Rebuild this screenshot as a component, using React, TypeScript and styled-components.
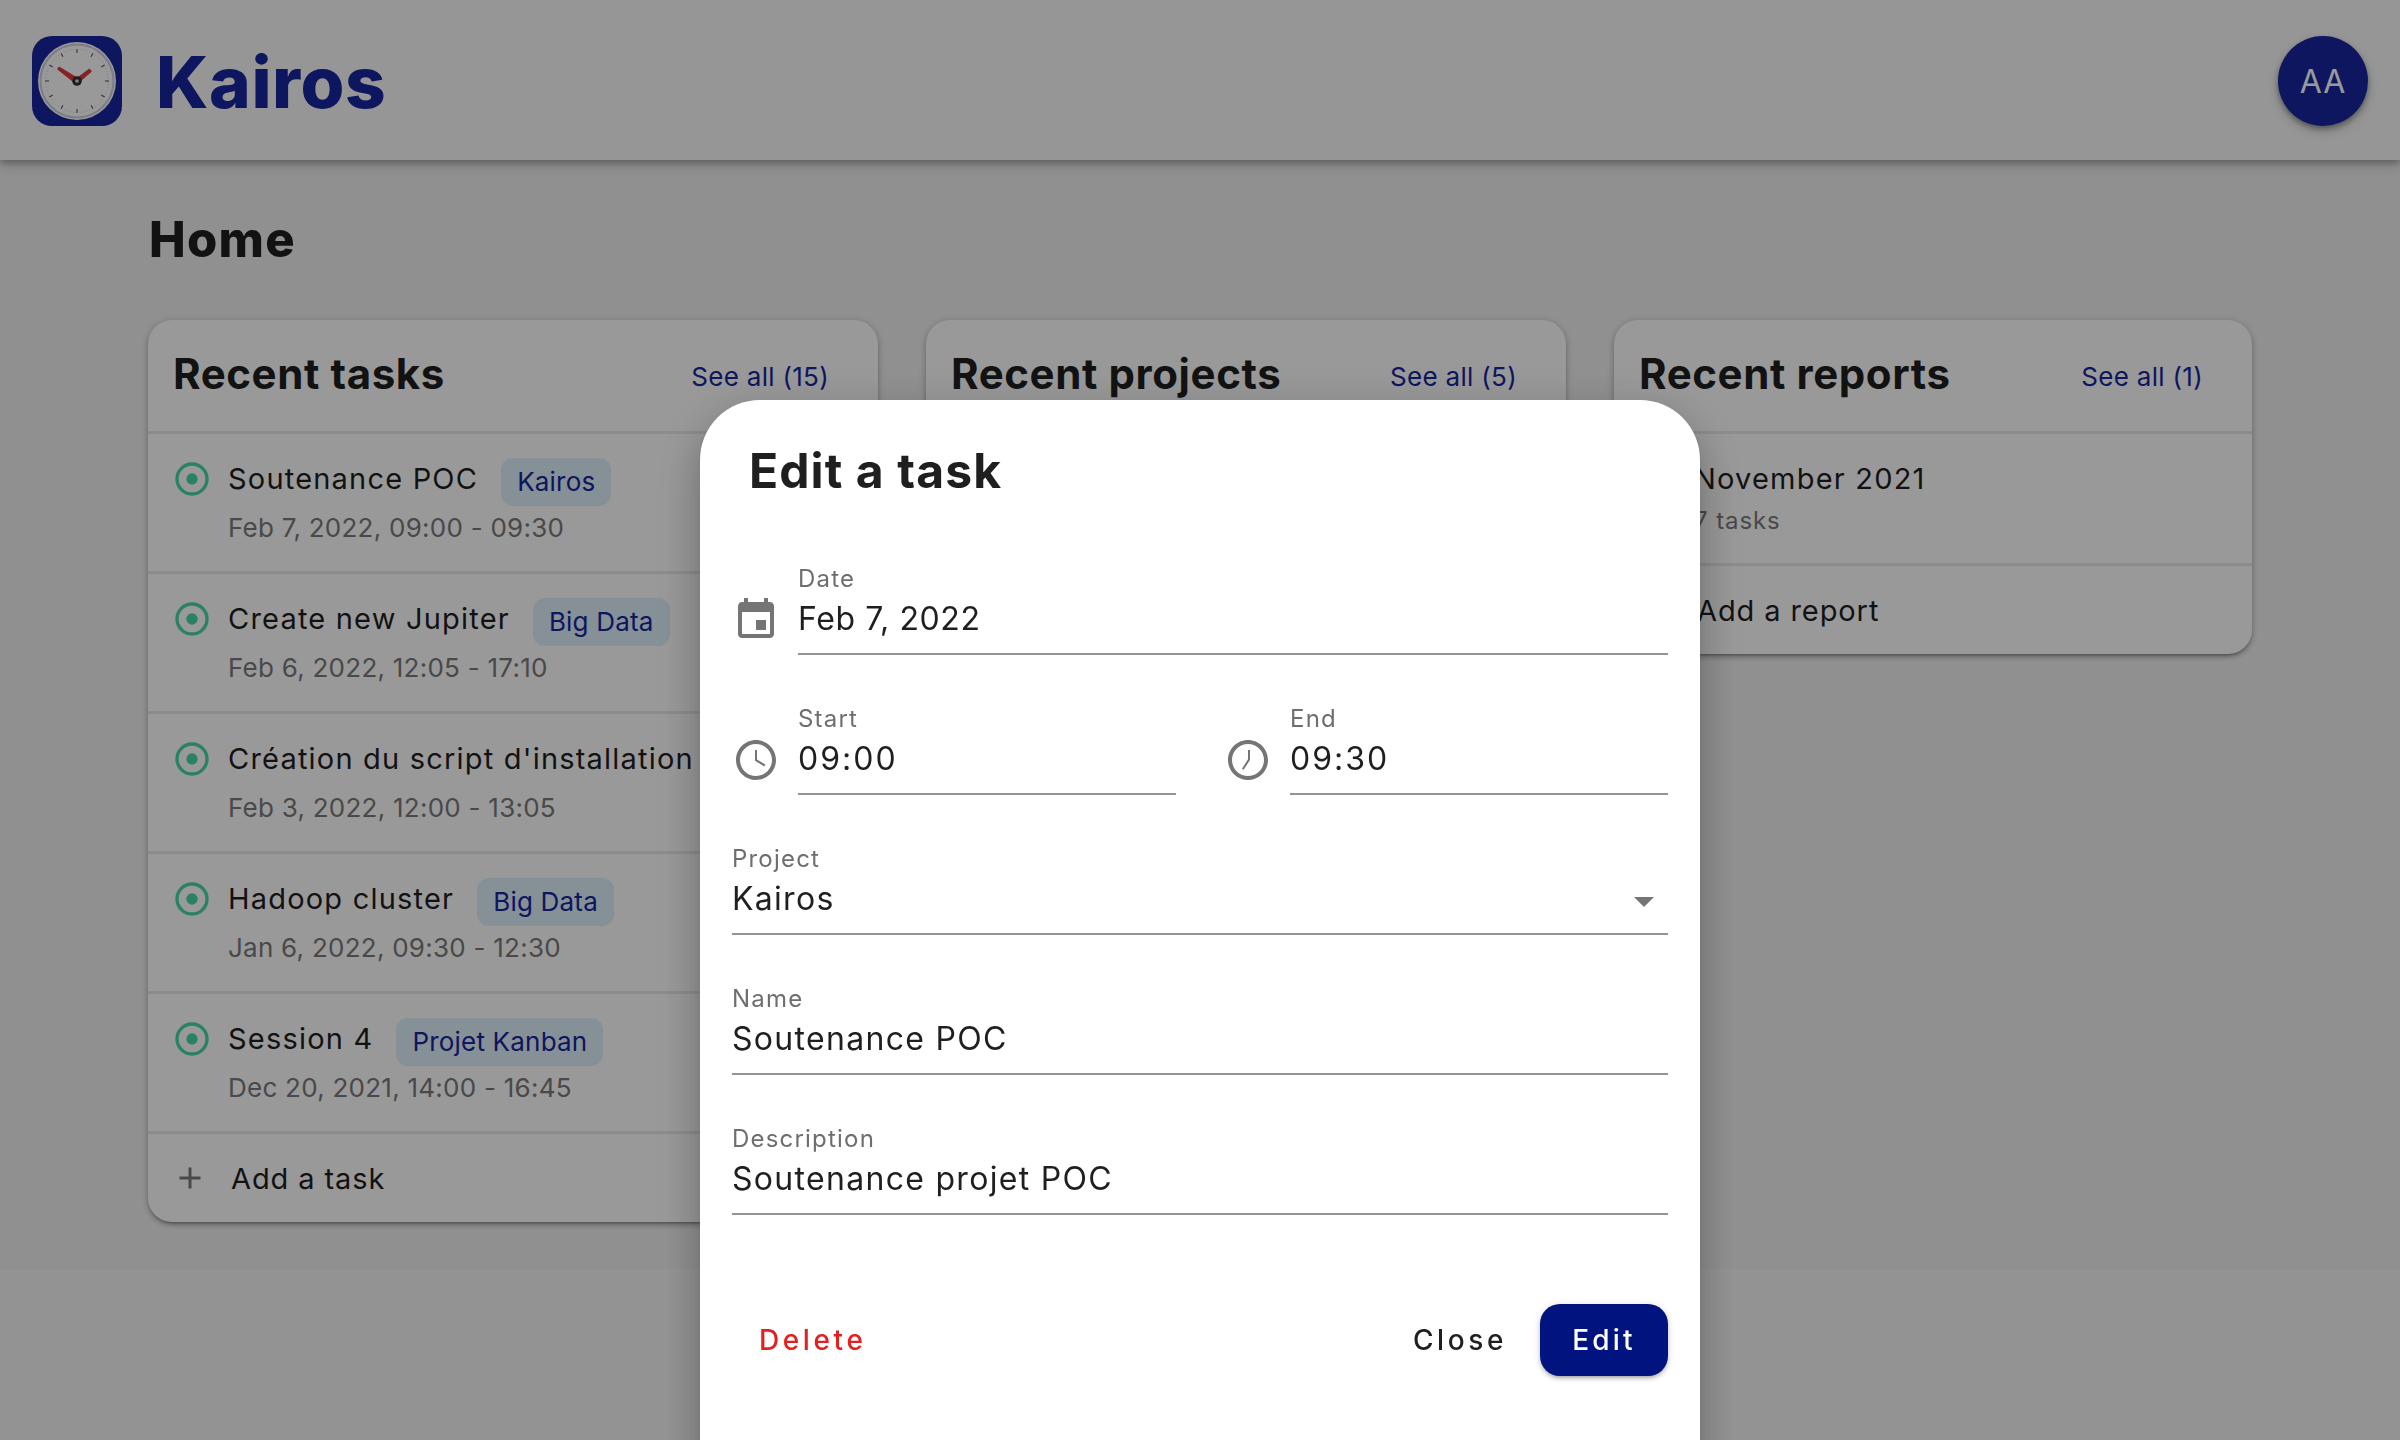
import React from "react";
import styled, { createGlobalStyle } from "styled-components";

const Global = createGlobalStyle`
  html, body { margin: 0; padding: 0; height: 100%; overflow: hidden; background: #f5f5f5; }
  * { box-sizing: border-box; }
  body { font-family: Inter, "Noto Sans", sans-serif; color: #1f1f1f; }
`;

const Page = styled.div`
  width: 2400px;
  height: 1440px;
  display: flex;
  flex-direction: column;
  overflow: hidden;
  background: #f1f1f1;
`;
const Header = styled.header`
  height: 160px;
  flex: none;
  display: flex;
  align-items: center;
  padding: 2px 32px 0;
  background: #fafafa;
  box-shadow: 0 3px 6px rgba(0,0,0,.25), 0 6px 14px rgba(0,0,0,.14);
  position: relative;
`;
const Logo = styled.svg`
  width: 90px;
  height: 90px;
  flex: none;
`;
const Brand = styled.div`
  margin: 2px 0 0 34px;
  font-size: 71px;
  font-weight: 800;
  color: #16269e;
  letter-spacing: 0.6px;
`;
const Avatar = styled.div`
  margin-left: auto;
  width: 90px;
  height: 90px;
  border-radius: 50%;
  background: #16269e;
  color: #fff;
  display: flex;
  align-items: center;
  justify-content: center;
  font-size: 32px;
  letter-spacing: 1px;
  box-shadow: 0 3px 5px rgba(0,0,0,.3), 0 5px 12px rgba(0,0,0,.2);
`;
const Main = styled.main`
  height: 1109px;
  flex: none;
  padding: 51px 148px 0;
`;
const PageTitle = styled.h1`
  margin: 0 0 51px 1px;
  font-size: 49px;
  line-height: 58px;
  font-weight: 800;
  letter-spacing: 1.3px;
`;
const Columns = styled.div`
  display: grid;
  grid-template-columns: 730px 640px 638px;
  gap: 48px;
  align-items: start;
`;
const Card = styled.section`
  background: #fff;
  border-radius: 24px;
  box-shadow: 0 3px 3px -2px rgba(0,0,0,.3), 0 3px 5px rgba(0,0,0,.2), 0 1px 10px rgba(0,0,0,.14);
  overflow: hidden;
`;
const CardHead = styled.div`
  height: 114px;
  display: flex;
  align-items: center;
  justify-content: space-between;
  padding: 0 49px 0 25px;
  border-bottom: 3px solid #e9e9e9;
`;
const CardTitle = styled.h2`
  margin: 0 0 4px;
  font-size: 42px;
  font-weight: 700;
  letter-spacing: 0.6px;
`;
const SeeAll = styled.a`
  font-size: 26px;
  color: #16269e;
  letter-spacing: 0.3px;
  margin-top: 2px;
`;
const Row = styled.div<{ $h: number }>`
  height: ${(p) => p.$h}px;
  display: flex;
  align-items: flex-start;
  padding: 24px 0 0 24px;
  border-bottom: 3px solid #e9e9e9;
`;
const RadioIcon = styled.svg`
  width: 40px;
  height: 40px;
  flex: none;
  color: #46d8a8;
  margin: 1px 16px 0 0;
`;
const RowBody = styled.div`
  min-width: 0;
  white-space: nowrap;
`;
const TitleLine = styled.div`
  display: flex;
  align-items: flex-start;
  gap: 23px;
`;
const RowTitle = styled.div`
  font-size: 29px;
  line-height: 42px;
  letter-spacing: 1.2px;
`;
const Chip = styled.span`
  height: 48px;
  padding: 0 16px 2px;
  display: flex;
  align-items: center;
  border-radius: 12px;
  background: #dff1fc;
  color: #16269e;
  font-size: 26px;
  letter-spacing: 0.2px;
`;
const RowSub = styled.div<{ $small?: boolean }>`
  margin-top: ${(p) => (p.$small ? 3 : 4)}px;
  font-size: ${(p) => (p.$small ? 24 : 26)}px;
  line-height: 36px;
  color: #7a7a7a;
  letter-spacing: ${(p) => (p.$small ? 0.9 : 0.25)}px;
`;
const AddRow = styled.div`
  height: 88px;
  display: flex;
  align-items: center;
  padding-left: 24px;
  font-size: 29px;
  letter-spacing: 0.9px;
`;
const PlusIcon = styled.svg`
  width: 36px;
  height: 36px;
  flex: none;
  color: #7a7a7a;
  margin-right: 23px;
`;
const Footer = styled.footer`
  flex: 1;
  background: #f6f6f6;
`;
const Overlay = styled.div`
  position: fixed;
  inset: 0;
  background: rgba(0,0,0,.4);
  display: flex;
  justify-content: center;
  align-items: flex-start;
`;
const Dialog = styled.div`
  margin-top: 400px;
  width: 1000px;
  height: 1100px;
  flex: none;
  background: #fff;
  border-radius: 60px 60px 0 0;
  padding: 42px 32px 0;
  box-shadow: 0 11px 15px -7px rgba(0,0,0,.2), 0 24px 38px 3px rgba(0,0,0,.14), 0 9px 46px 8px rgba(0,0,0,.12);
`;
const DialogTitle = styled.h2`
  margin: 0 0 63px 17px;
  font-size: 48px;
  line-height: 58px;
  font-weight: 700;
  letter-spacing: 1.1px;
`;
const Form = styled.div`
  display: flex;
  flex-direction: column;
  gap: 48px;
`;
const Pair = styled.div`
  display: grid;
  grid-template-columns: 444px 444px;
  gap: 48px;
`;
const IconField = styled.div`
  display: flex;
  align-items: flex-start;
  gap: 18px;
`;
const FieldIcon = styled.svg`
  width: 48px;
  height: 48px;
  flex: none;
  margin-top: 33px;
  color: #757575;
`;
const Field = styled.div`
  height: 92px;
  padding-top: 1px;
  border-bottom: 2px solid #949494;
  position: relative;
`;
const InlineField = styled(Field)`
  flex: 1;
  min-width: 0;
`;
const Label = styled.div`
  font-size: 24px;
  line-height: 30px;
  color: #6e6e6e;
  letter-spacing: 1.2px;
`;
const Value = styled.div<{ $spacing?: number }>`
  margin-top: 5px;
  font-size: 32px;
  line-height: 40px;
  color: #1f1f1f;
  letter-spacing: ${(p) => p.$spacing ?? 1.3}px;
`;
const Caret = styled.svg`
  position: absolute;
  right: 0;
  top: 34px;
  width: 48px;
  height: 48px;
  color: #757575;
`;
const Actions = styled.div`
  margin-top: 89px;
  display: flex;
  align-items: center;
`;
const TextButton = styled.button<{ $danger?: boolean }>`
  height: 72px;
  padding: 0 27px;
  border: 0;
  background: none;
  font: 500 28px Inter, sans-serif;
  letter-spacing: 3.6px;
  color: ${(p) => (p.$danger ? "#e32020" : "#1f1f1f")};
`;
const PrimaryButton = styled.button`
  height: 72px;
  width: 128px;
  margin-left: 6px;
  border: 0;
  border-radius: 20px;
  background: #00137f;
  color: #fff;
  font: 500 28px Inter, sans-serif;
  letter-spacing: 3.2px;
  box-shadow: 0 3px 3px -2px rgba(0,0,0,.2), 0 3px 4px rgba(0,0,0,.14), 0 1px 8px rgba(0,0,0,.12);
`;
const Spacer = styled.div`
  flex: 1;
`;

const Radio = () => (
  <RadioIcon viewBox="0 0 24 24">
    <circle cx="12" cy="12" r="9" fill="none" stroke="currentColor" strokeWidth="2" />
    <circle cx="12" cy="12" r="3.4" fill="currentColor" />
  </RadioIcon>
);
const Plus = () => (
  <PlusIcon viewBox="0 0 24 24">
    <path fill="currentColor" d="M19 13h-6v6h-2v-6H5v-2h6V5h2v6h6v2z" />
  </PlusIcon>
);

const ClockLogo = () => (
  <Logo viewBox="0 0 90 90">
    <rect width="90" height="90" rx="20" fill="#16269e" />
    <circle cx="45" cy="45" r="39" fill="#fff" />
    <circle cx="45" cy="45" r="36.5" fill="none" stroke="#cfcfe2" strokeWidth="2" />
    {Array.from({ length: 60 }).map((_, i) => (
      <line
        key={i}
        x1="45"
        y1="13"
        x2="45"
        y2={i % 5 === 0 ? 17 : 14}
        stroke={i % 5 === 0 ? "#555566" : "#c4c4cc"}
        strokeWidth={i % 5 === 0 ? 1.1 : 0.7}
        transform={`rotate(${i * 6} 45 45)`}
      />
    ))}
    <path d="M47 43 L27 31 L25.6 33.2 L43 47 Z" fill="#e0383c" stroke="#e0383c" strokeWidth="1" strokeLinejoin="round" />
    <path d="M43.4 43.4 L57.4 33 L59.4 35.4 L46.6 46.6 Z" fill="#e0383c" stroke="#e0383c" strokeWidth="1" strokeLinejoin="round" />
    <circle cx="45" cy="45" r="4.8" fill="#333" />
    <circle cx="45" cy="45" r="1.8" fill="#ddd" />
  </Logo>
);

const tasks = [
  ["Soutenance POC", "Kairos", "Feb 7, 2022, 09:00 - 09:30"],
  ["Create new Jupiter", "Big Data", "Feb 6, 2022, 12:05 - 17:10"],
  ["Création du script d'installation", "Big Data", "Feb 3, 2022, 12:00 - 13:05"],
  ["Hadoop cluster", "Big Data", "Jan 6, 2022, 09:30 - 12:30"],
  ["Session 4", "Projet Kanban", "Dec 20, 2021, 14:00 - 16:45"],
];

export default function App() {
  return (
    <>
      <Global />
      <Page>
        <Header>
          <ClockLogo />
          <Brand>Kairos</Brand>
          <Avatar>AA</Avatar>
        </Header>
        <Main>
          <PageTitle>Home</PageTitle>
          <Columns>
            <Card>
              <CardHead>
                <CardTitle>Recent tasks</CardTitle>
                <SeeAll>See all (15)</SeeAll>
              </CardHead>
              {tasks.map((t) => (
                <Row key={t[0]} $h={140}>
                  <Radio />
                  <RowBody>
                    <TitleLine>
                      <RowTitle>{t[0]}</RowTitle>
                      <Chip>{t[1]}</Chip>
                    </TitleLine>
                    <RowSub>{t[2]}</RowSub>
                  </RowBody>
                </Row>
              ))}
              <AddRow>
                <Plus />
                Add a task
              </AddRow>
            </Card>
            <Card>
              <CardHead>
                <CardTitle>Recent projects</CardTitle>
                <SeeAll>See all (5)</SeeAll>
              </CardHead>
            </Card>
            <Card>
              <CardHead>
                <CardTitle>Recent reports</CardTitle>
                <SeeAll>See all (1)</SeeAll>
              </CardHead>
              <Row $h={132}>
                <Radio />
                <RowBody>
                  <RowTitle>November 2021</RowTitle>
                  <RowSub $small>7 tasks</RowSub>
                </RowBody>
              </Row>
              <AddRow>
                <Plus />
                Add a report
              </AddRow>
            </Card>
          </Columns>
        </Main>
        <Footer />
        <Overlay>
          <Dialog>
            <DialogTitle>Edit a task</DialogTitle>
            <Form>
              <IconField>
                <FieldIcon viewBox="0 0 24 24">
                  <path
                    fill="currentColor"
                    d="M17 12h-5v5h5v-5zM16 1v2H8V1H6v2H5c-1.11 0-1.99.9-1.99 2L3 19c0 1.1.89 2 2 2h14c1.1 0 2-.9 2-2V5c0-1.1-.9-2-2-2h-1V1h-2zm3 18H5V8h14v11z"
                  />
                </FieldIcon>
                <InlineField>
                  <Label>Date</Label>
                  <Value $spacing={0.6}>Feb 7, 2022</Value>
                </InlineField>
              </IconField>
              <Pair>
                <IconField>
                  <FieldIcon viewBox="0 0 24 24">
                    <path
                      fill="currentColor"
                      d="M11.99 2C6.47 2 2 6.48 2 12s4.47 10 9.99 10C17.52 22 22 17.52 22 12S17.52 2 11.99 2zM12 20c-4.42 0-8-3.58-8-8s3.58-8 8-8 8 3.58 8 8-3.58 8-8 8z"
                    />
                    <path fill="currentColor" d="M12.5 7H11.5v5.4l4.6 2.8.6-.9-4.2-2.5z" />
                  </FieldIcon>
                  <InlineField>
                    <Label>Start</Label>
                    <Value $spacing={2}>09:00</Value>
                  </InlineField>
                </IconField>
                <IconField>
                  <FieldIcon viewBox="0 0 24 24">
                    <path
                      fill="currentColor"
                      d="M11.99 2C6.47 2 2 6.48 2 12s4.47 10 9.99 10C17.52 22 22 17.52 22 12S17.52 2 11.99 2zM12 20c-4.42 0-8-3.58-8-8s3.58-8 8-8 8 3.58 8 8-3.58 8-8 8z"
                    />
                    <path fill="none" stroke="currentColor" strokeWidth="1" d="M12.5 7v4.8L9.4 16.6" />
                  </FieldIcon>
                  <InlineField>
                    <Label>End</Label>
                    <Value $spacing={2}>09:30</Value>
                  </InlineField>
                </IconField>
              </Pair>
              <Field>
                <Label>Project</Label>
                <Value>Kairos</Value>
                <Caret viewBox="0 0 24 24">
                  <path fill="currentColor" d="M7 10l5 5 5-5z" />
                </Caret>
              </Field>
              <Field>
                <Label>Name</Label>
                <Value>Soutenance POC</Value>
              </Field>
              <Field>
                <Label>Description</Label>
                <Value>Soutenance projet POC</Value>
              </Field>
            </Form>
            <Actions>
              <TextButton $danger>Delete</TextButton>
              <Spacer />
              <TextButton>Close</TextButton>
              <PrimaryButton>Edit</PrimaryButton>
            </Actions>
          </Dialog>
        </Overlay>
      </Page>
    </>
  );
}
